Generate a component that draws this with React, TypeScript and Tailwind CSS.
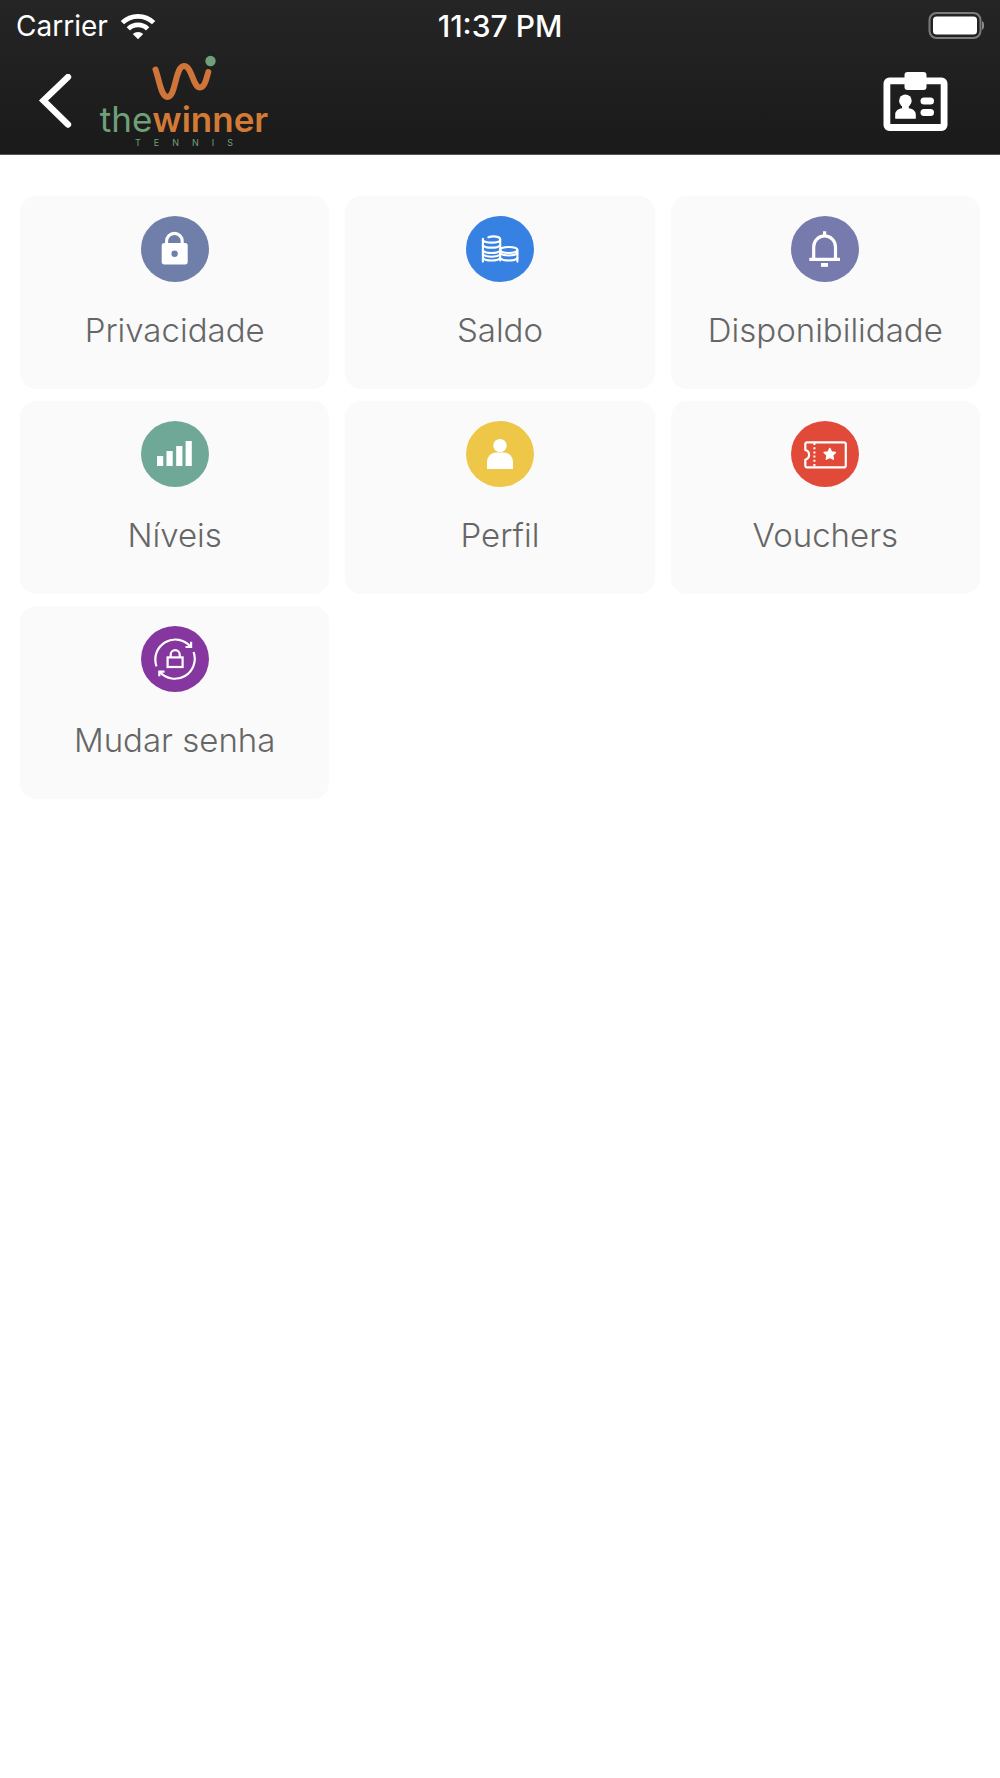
import type * as React from 'react'

type MenuItem = {
  id: string
  label: string
  color: string
  icon: React.ReactNode
}

const MENU_ITEMS: MenuItem[] = [
  {
    id: 'privacy',
    label: 'Privacidade',
    color: 'text-[#6f7faa]',
    icon: (
      <>
        <rect x="20.7" y="27" width="26" height="21.4" rx="2.6" fill="#fff" />
        <path d="M25.6 28v-2.8a7.8 7.8 0 0 1 15.6 0V28" fill="none" stroke="#fff" strokeWidth="3.1" />
        <circle cx="33.6" cy="37.7" r="3.2" fill="currentColor" />
      </>
    )
  },
  {
    id: 'balance',
    label: 'Saldo',
    color: 'text-[#3681e2]',
    icon: (
      <g fill="none" stroke="#fff" strokeWidth="2.1" strokeLinecap="round">
        <path d="M16.9 22.8v22.8M34.2 23.4v21M51.4 34v11.6" />
        <path d="M22.4 21.3c5-1.8 11.800-.7 11.800 2.100 0 2.700-4 3.200-8.700 3.200-4 0-7.600-.8-8.600-2.200" />
        <path d="M16.900 29.400c3 3 14.300 3 17.300 0M16.900 34.800c3 3 14.300 3 17.300 0M16.900 42.200c3 3 14.300 3 17.300 0M16.900 38.600c3 2.800 14.300 2.800 17.300 0" />
        <ellipse cx="42.800" cy="34" rx="8.600" ry="3" />
        <path d="M34.200 37.200c3 3 14.200 3 17.200 0M34.200 42.200c3 3 14.200 3 17.200 0" />
      </g>
    )
  },
  {
    id: 'availability',
    label: 'Disponibilidade',
    color: 'text-[#767aad]',
    icon: (
      <>
        <path
          d="M22.7 43V30.8a10.9 10.9 0 0 1 21.8 0V43M18.3 43.4H49M33.6 15.3v5"
          fill="none"
          stroke="#fff"
          strokeWidth="3.2"
        />
        <rect x="30" y="47" width="7" height="3.8" fill="#fff" />
      </>
    )
  },
  {
    id: 'levels',
    label: 'Níveis',
    color: 'text-[#6fa896]',
    icon: <path d="M16 35h6.2v10H16zM25.500 30h6.200v15h-6.200zM35.200 25h6.200v20h-6.200zM44.600 20h6.200v25h-6.200z" fill="#fff" />
  },
  {
    id: 'profile',
    label: 'Perfil',
    color: 'text-[#eec749]',
    icon: (
      <>
        <circle cx="34" cy="24.6" r="6.7" fill="#fff" />
        <path d="M21 48v-7.400a9 9 0 0 1 9-9h8a9 9 0 0 1 9 9V48z" fill="#fff" />
      </>
    )
  },
  {
    id: 'vouchers',
    label: 'Vouchers',
    color: 'text-[#e14a39]',
    icon: (
      <>
        <path
          d="M16 21.3h37a1.800 1.800 0 0 1 1.800 1.800v21.500a1.800 1.800 0 0 1-1.800 1.800H16a1.700 1.700 0 0 1-1.700-1.700v-6a5 5 0 0 0 0-9.700v-6a1.700 1.700 0 0 1 1.700-1.700z"
          fill="none"
          stroke="#fff"
          strokeWidth="2.2"
          strokeLinejoin="round"
        />
        <path d="M23.4 22v24" stroke="#fff" strokeWidth="2" strokeDasharray="2 2.2" />
        <path
          d="M38.8 27.4l1.800 3.600 3.900.5-2.800 2.800.7 3.900-3.600-1.900-3.500 1.900.7-3.900-2.900-2.800 4-.5z"
          fill="#fff"
          stroke="#fff"
          strokeWidth="1.4"
          strokeLinejoin="round"
        />
      </>
    )
  },
  {
    id: 'password',
    label: 'Mudar senha',
    color: 'text-[#85379f]',
    icon: (
      <g fill="none" stroke="#fff" strokeWidth="2.2">
        <path d="M15.500 40.300A20 20 0 0 1 49.500 20.500M52.600 26A20 20 0 0 1 18.800 46" />
        <path d="M44.500 21h5.600v-5.300M18.300 50.300V45.600h5.200" />
        <rect x="26.600" y="31.400" width="15" height="9.600" />
        <path d="M29.700 31.400v-2.800a4.500 4.500 0 0 1 9 0v2.800" />
      </g>
    )
  }
]

function StatusBar() {
  return (
    <div className="grid h-[51px] grid-cols-3 items-center px-4 text-[28px] leading-8">
      <div className="flex items-center gap-3">
        <span>Carrier</span>
        <svg className="h-7 w-9" viewBox="0 0 38 28" aria-hidden="true">
          <g fill="none" stroke="#fff" strokeWidth="5">
            <path d="M2.5 10.5a23.5 23.5 0 0 1 33 0" />
            <path d="M8.8 17a14.500 14.500 0 0 1 20.400 0" />
          </g>
          <path d="M19 28l-5.500-5.600a8 8 0 0 1 11 0z" fill="#fff" />
        </svg>
      </div>
      <span className="text-center text-[30px] font-medium">11:37 PM</span>
      <svg className="h-7 w-[60px] justify-self-end" viewBox="0 0 60 28" aria-hidden="true">
        <rect x="5.500" y="1" width="51" height="25" rx="7" fill="none" stroke="#7c7c7c" strokeWidth="2" />
        <rect x="9" y="4.500" width="44" height="18" rx="3.500" fill="#fff" />
        <path d="M58 9c3 1.500 3 7.500 0 9z" fill="#8a8a8a" />
      </svg>
    </div>
  )
}

function Logo() {
  return (
    <div className="flex w-[168px] flex-col items-center">
      <svg className="h-[46px] w-[168px]" viewBox="0 0 168 46" aria-hidden="true">
        <path
          d="M55.500 14.500C59 24 61 41.800 67.500 42C76 42 75 11 84 11C92 11 93 32.500 100 32.500C105 32.500 106.500 23 108.300 17"
          fill="none"
          stroke="#d0753a"
          strokeWidth="6"
          strokeLinecap="round"
        />
        <circle cx="110.500" cy="6" r="5.200" fill="#6fa079" />
      </svg>
      <div className="h-9 text-[35px] leading-9 whitespace-nowrap text-[#6fa079]">
        <span>the</span>
        <span className="font-semibold text-[#d27a36]">winner</span>
      </div>
      <div className="flex w-[98px] justify-between text-[9px] leading-3 text-[#6fa079]">
        {'TENNIS'.split('').map((letter, index) => (
          <span key={index}>{letter}</span>
        ))}
      </div>
    </div>
  )
}

function Header() {
  return (
    <header className="border-b border-[#555] bg-linear-to-b from-[#252525] to-[#1a1a1a] text-white">
      <StatusBar />
      <div className="flex h-[103px] items-start pr-[52px] pl-9">
        <button type="button" aria-label="Voltar" className="mt-[23px]">
          <svg className="h-14 w-10" viewBox="0 0 40 56" aria-hidden="true">
            <path d="M32 3L7.500 26.500L32 50.500" fill="none" stroke="#fff" strokeWidth="6.4" strokeLinecap="round" strokeLinejoin="miter" />
          </svg>
        </button>
        <div className="mt-1 ml-6">
          <Logo />
        </div>
        <button type="button" aria-label="Cartão de sócio" className="mt-[21px] ml-auto">
          <svg className="h-[60px] w-[65px]" viewBox="0 0 65 60" aria-hidden="true">
            <rect x="3.900" y="8.900" width="57.200" height="46.600" rx="2.500" fill="none" stroke="#fff" strokeWidth="6.800" />
            <rect x="21.500" y="0" width="22" height="18" rx="3" fill="#fff" />
            <circle cx="22.400" cy="28.800" r="6.300" fill="#fff" />
            <path d="M19 32h6.800v4.200c4 .8 7 2.600 7 6.300v4.300H12.200v-4.300c0-3.700 3-5.500 6.800-6.300z" fill="#fff" />
            <rect x="37.500" y="25.500" width="13.500" height="7" rx="3.500" fill="#fff" />
            <rect x="37.500" y="37" width="13.500" height="7" rx="3.500" fill="#fff" />
          </svg>
        </button>
      </div>
    </header>
  )
}

function MenuCard({ item }: { item: MenuItem }) {
  return (
    <button type="button" className="flex h-[193px] flex-col items-center gap-8 rounded-2xl bg-[#fafafa] pt-5">
      <svg className={`h-[66px] w-[68px] ${item.color}`} viewBox="0 0 68 66" aria-hidden="true">
        <ellipse cx="34" cy="33" rx="34" ry="33" fill="currentColor" />
        {item.icon}
      </svg>
      <span className="text-[33px] leading-8 font-light text-[#666]">{item.label}</span>
    </button>
  )
}

export default function App() {
  return (
    <div className="min-h-screen bg-white font-['Inter',sans-serif]">
      <Header />
      <main className="grid grid-cols-3 gap-x-4 gap-y-3 px-5 pt-[41px]">
        {MENU_ITEMS.map((item) => (
          <MenuCard key={item.id} item={item} />
        ))}
      </main>
    </div>
  )
}
